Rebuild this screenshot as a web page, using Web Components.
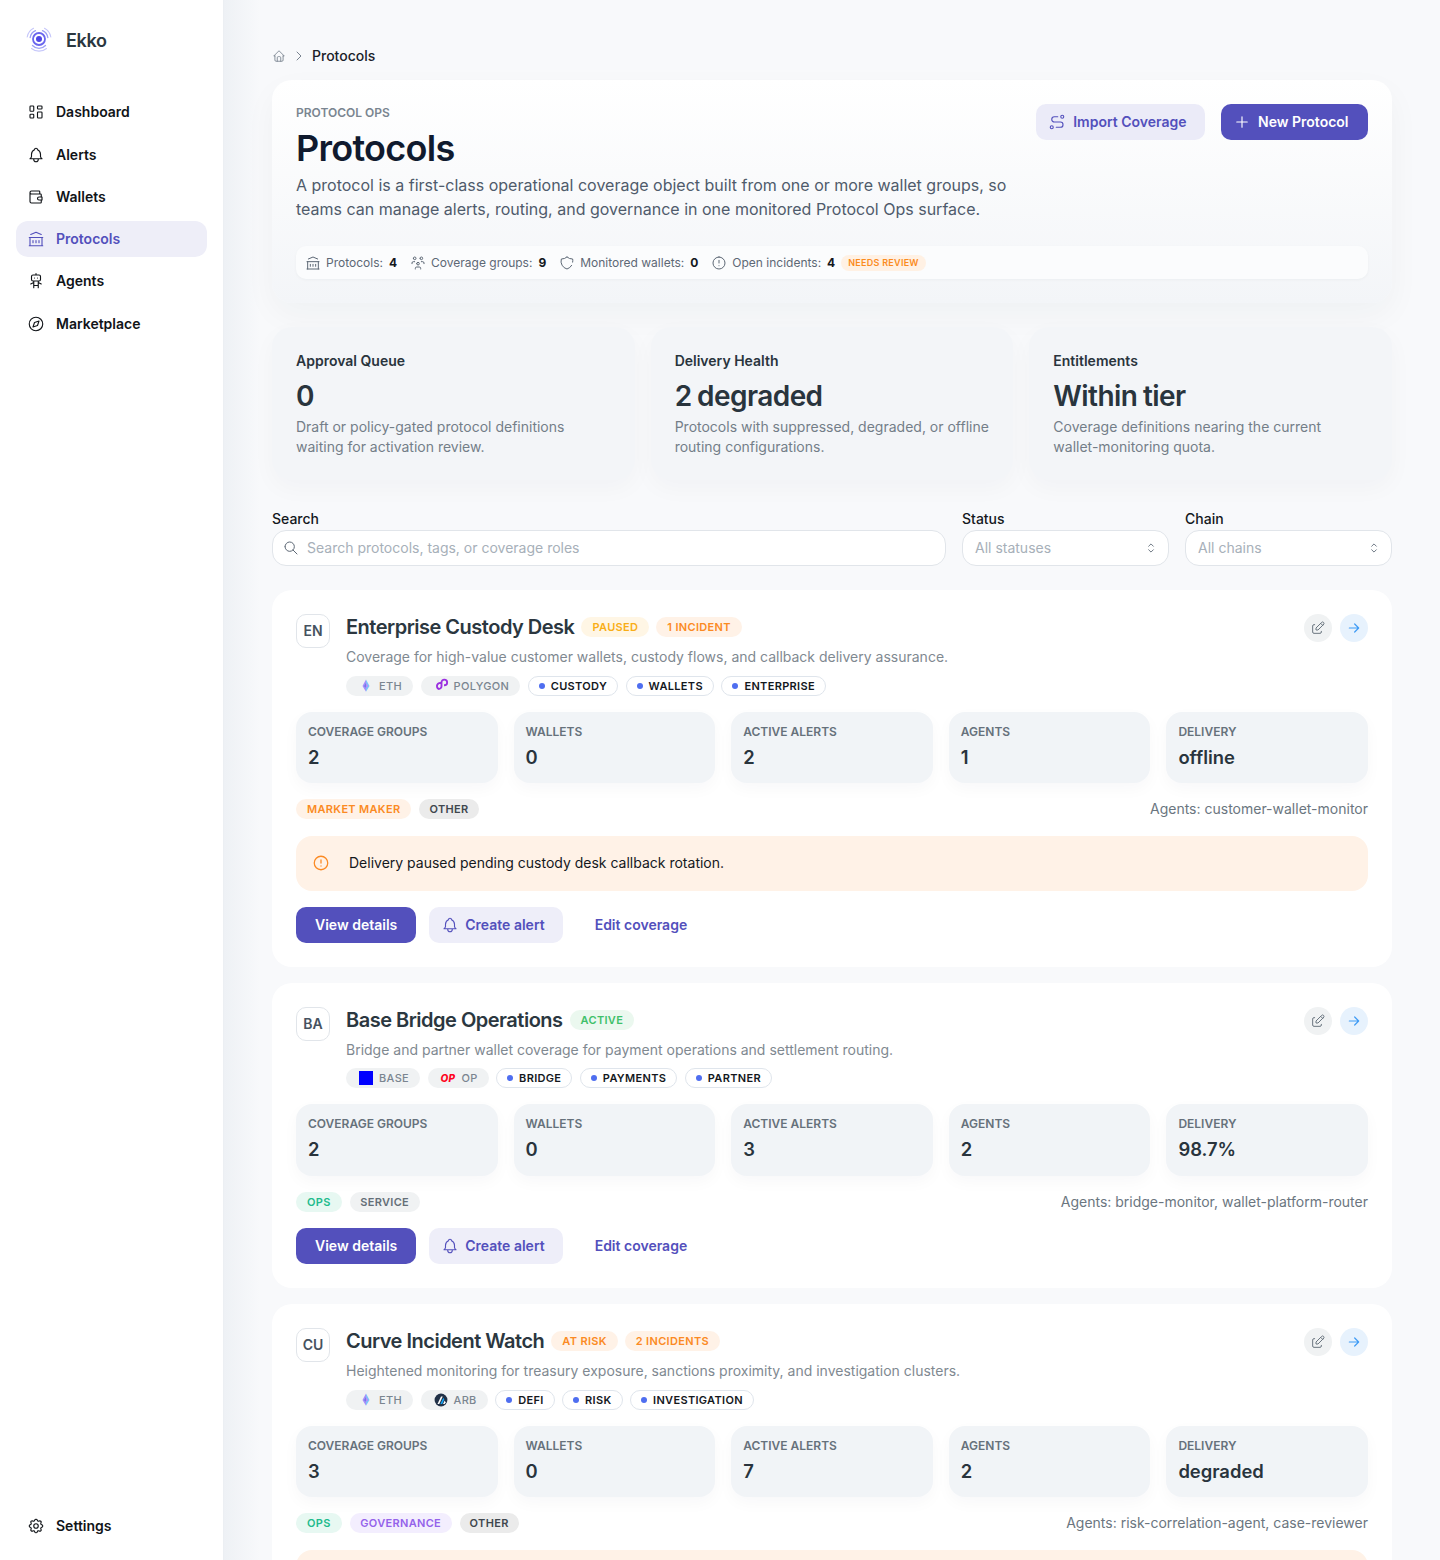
<!DOCTYPE html>
<html lang="en">
<head>
<meta charset="utf-8">
<title>Ekko - Protocols</title>
<style>
  html, body { margin: 0; height: 100%; overflow: hidden; background: #f8f9fb; }
  body { font-family: Inter, "Liberation Sans", sans-serif; color: #0f172a; }
</style>
</head>
<body>
<ekko-shell>
  <ekko-sidebar slot="sidebar"></ekko-sidebar>

  <ekko-breadcrumb>Protocols</ekko-breadcrumb>

  <ekko-hero></ekko-hero>

  <ekko-summary>
    <ekko-summary-card title="Approval Queue" value="0">Draft or policy-gated protocol definitions waiting for activation review.</ekko-summary-card>
    <ekko-summary-card title="Delivery Health" value="2 degraded">Protocols with suppressed, degraded, or offline routing configurations.</ekko-summary-card>
    <ekko-summary-card title="Entitlements" value="Within tier">Coverage definitions nearing the current wallet-monitoring quota.</ekko-summary-card>
  </ekko-summary>

  <ekko-filters></ekko-filters>

  <protocol-card code="EN" name="Enterprise Custody Desk"
    desc="Coverage for high-value customer wallets, custody flows, and callback delivery assurance."
    badges="paused:PAUSED,orange:1 INCIDENT" chains="eth:ETH,polygon:POLYGON" tags="CUSTODY,WALLETS,ENTERPRISE"
    metrics="2,0,2,1,offline" roles="orange:MARKET MAKER,gray:OTHER"
    agents="Agents: customer-wallet-monitor"
    alert="Delivery paused pending custody desk callback rotation."></protocol-card>

  <protocol-card code="BA" name="Base Bridge Operations"
    desc="Bridge and partner wallet coverage for payment operations and settlement routing."
    badges="green:ACTIVE" chains="base:BASE,op:OP" tags="BRIDGE,PAYMENTS,PARTNER"
    metrics="2,0,3,2,98.7%" roles="teal:OPS,slate:SERVICE"
    agents="Agents: bridge-monitor, wallet-platform-router"></protocol-card>

  <!-- the page is cut just under the alert's top edge here, so no alert text and no action row -->
  <protocol-card code="CU" name="Curve Incident Watch" no-actions
    desc="Heightened monitoring for treasury exposure, sanctions proximity, and investigation clusters."
    badges="orange:AT RISK,orange:2 INCIDENTS" chains="eth:ETH,arb:ARB" tags="DEFI,RISK,INVESTIGATION"
    metrics="3,0,7,2,degraded" roles="teal:OPS,violet:GOVERNANCE,gray:OTHER"
    agents="Agents: risk-correlation-agent, case-reviewer"
    alert=" "></protocol-card>
</ekko-shell>

<script>
// tabler style outline icons, all on a 24 box
const ICONS = {
  dashboard: 'M5 4h3a1 1 0 0 1 1 1v5a1 1 0 0 1-1 1H5a1 1 0 0 1-1-1V5a1 1 0 0 1 1-1z M5 15h3a1 1 0 0 1 1 1v3a1 1 0 0 1-1 1H5a1 1 0 0 1-1-1v-3a1 1 0 0 1 1-1z M15 4h4a1 1 0 0 1 1 1v2a1 1 0 0 1-1 1h-4a1 1 0 0 1-1-1V5a1 1 0 0 1 1-1z M15 12h4a1 1 0 0 1 1 1v6a1 1 0 0 1-1 1h-4a1 1 0 0 1-1-1v-6a1 1 0 0 1 1-1z',
  bell: 'M10 5a2 2 0 1 1 4 0a7 7 0 0 1 4 6v3a4 4 0 0 0 2 3H4a4 4 0 0 0 2-3v-3a7 7 0 0 1 4-6 M9 17v1a3 3 0 0 0 6 0v-1',
  wallet: 'M17 8V5a1 1 0 0 0-1-1H6a2 2 0 0 0 0 4h12a1 1 0 0 1 1 1v3 M19 16v3a1 1 0 0 1-1 1H6a2 2 0 0 1-2-2V6 M20 12v4h-4a2 2 0 0 1 0-4h4',
  bank: 'M3 21h18 M3 10h18 M5 6l7-3l7 3 M4 10v11 M20 10v11 M8 14v3 M12 14v3 M16 14v3',
  robot: 'M6 6a2 2 0 0 1 2-2h8a2 2 0 0 1 2 2v4a2 2 0 0 1-2 2H8a2 2 0 0 1-2-2z M12 2v2 M9 12v9 M15 12v9 M5 16l4-2 M15 14l4 2 M9 18h6 M10 8v.01 M14 8v.01',
  compass: 'M12 3a9 9 0 1 0 0 18a9 9 0 0 0 0-18z M8 16l2-6l6-2l-2 6l-6 2',
  settings: 'M10.325 4.317c.426-1.756 2.924-1.756 3.35 0a1.724 1.724 0 0 0 2.573 1.066c1.543-.94 3.31.826 2.37 2.37a1.724 1.724 0 0 0 1.065 2.572c1.756.426 1.756 2.924 0 3.35a1.724 1.724 0 0 0-1.066 2.573c.94 1.543-.826 3.31-2.37 2.37a1.724 1.724 0 0 0-2.572 1.065c-.426 1.756-2.924 1.756-3.35 0a1.724 1.724 0 0 0-2.573-1.066c-1.543.94-3.31-.826-2.37-2.37a1.724 1.724 0 0 0-1.065-2.572c-1.756-.426-1.756-2.924 0-3.35a1.724 1.724 0 0 0 1.066-2.573c-.94-1.543.826-3.31 2.37-2.37c1 .608 2.296.07 2.572-1.065z M9 12a3 3 0 1 0 6 0a3 3 0 0 0-6 0',
  home: 'M5 12H3l9-9l9 9h-2 M5 12v7a2 2 0 0 0 2 2h10a2 2 0 0 0 2-2v-7 M9 21v-6a2 2 0 0 1 2-2h2a2 2 0 0 1 2 2v6',
  chevron: 'M9 6l6 6l-6 6',
  users: 'M10 13a2 2 0 1 0 4 0a2 2 0 0 0-4 0 M8 21v-1a2 2 0 0 1 2-2h4a2 2 0 0 1 2 2v1 M15 5a2 2 0 1 0 4 0a2 2 0 0 0-4 0 M17 10h2a2 2 0 0 1 2 2v1 M5 5a2 2 0 1 0 4 0a2 2 0 0 0-4 0 M3 13v-1a2 2 0 0 1 2-2h2',
  shield: 'M12 3a12 12 0 0 0 8.5 3c.3 1.6.3 3.2 0 4.7 M19 15.5a12 12 0 0 1-7 5.5a12 12 0 0 1-8.5-15a12 12 0 0 0 8.5-3',
  alert: 'M12 3a9 9 0 1 0 0 18a9 9 0 0 0 0-18z M12 8v4 M12 16h.01',
  route: 'M3 19a2 2 0 1 0 4 0a2 2 0 0 0-4 0 M19 7a2 2 0 1 0 0-4a2 2 0 0 0 0 4z M11 19h5.5a3.5 3.5 0 0 0 0-7h-8a3.5 3.5 0 0 1 0-7h4.5',
  plus: 'M12 5v14 M5 12h14',
  search: 'M3 10a7 7 0 1 0 14 0a7 7 0 0 0-14 0 M21 21l-6-6',
  selector: 'M8 9l4-4l4 4 M16 15l-4 4l-4-4',
  edit: 'M7 7H6a2 2 0 0 0-2 2v9a2 2 0 0 0 2 2h9a2 2 0 0 0 2-2v-1 M20.385 6.585a2.1 2.1 0 0 0-2.97-2.97L9 12v3h3l8.385-8.415z M16 5l3 3',
  arrow: 'M5 12h14 M13 18l6-6 M13 6l6 6'
};

const icon = (name, size = 16, width = 1.5) =>
  `<svg width="${size}" height="${size}" viewBox="0 0 24 24" fill="none" stroke="currentColor" stroke-width="${width}" stroke-linecap="round" stroke-linejoin="round" style="display:block;flex:none"><path d="${ICONS[name]}"/></svg>`;

// Logos of the chains
const CHAIN_LOGOS = {
  eth: `<svg width="14" height="14" viewBox="0 0 24 24" style="display:block;flex:none"><path d="M12 1L6 12l6 10z" fill="#a78bfa"/><path d="M12 1l6 11l-6 10z" fill="#7cc4f8"/><path d="M12 7L8.500 12.500L12 15z" fill="#6d7fe8"/><path d="M12 7l3.500 5.500L12 15z" fill="#c084fc"/></svg>`,
  polygon: `<svg width="15" height="15" viewBox="0 0 24 24" fill="none" stroke="#9b30e0" stroke-width="3" stroke-linejoin="round" style="display:block;flex:none;margin-right:-1px"><path d="M10 11v-.5a4.500 4.500 0 1 0-4.500 9a4.500 4.500 0 0 0 4.500-4.500V9a4.500 4.500 0 1 1 4.500 4.500H14" transform="translate(2 -2)"/></svg>`,
  base: `<svg width="14" height="14" viewBox="0 0 14 14" style="display:block;flex:none"><rect width="14" height="14" fill="#0000ff"/></svg>`,
  arb: `<svg width="14" height="14" viewBox="0 0 24 24" style="display:block;flex:none"><circle cx="12" cy="12" r="11" fill="#213147"/><path d="M6 19l6-13h3l-6 13z" fill="#fff"/><path d="M11 19l5-11l1.500 3l-3.500 8z" fill="#12aaff"/><path d="M15.500 19l2.800-6l1.500 3l-1.500 3z" fill="#fff"/></svg>`
};

class EkkoShell extends HTMLElement {
  constructor() {
    super();
    this.attachShadow({ mode: 'open' }).innerHTML = `
      <style>
        :host { display: grid; grid-template-columns: 224px 1fr; height: 100vh; overflow: hidden; }
        main {
          display: flex; flex-direction: column; gap: 16px; min-width: 0; overflow: hidden;
          padding: 46px 48px 0;
          background: linear-gradient(90deg, #eef1f5 0, #f8f9fb 36px);
        }
        ::slotted(*) { flex: none; }
      </style>
      <slot name="sidebar"></slot>
      <main><slot></slot></main>`;
  }
}

class EkkoSidebar extends HTMLElement {
  constructor() {
    super();
    const items = [['dashboard', 'Dashboard'], ['bell', 'Alerts'], ['wallet', 'Wallets'], ['bank', 'Protocols', true], ['robot', 'Agents'], ['compass', 'Marketplace']];
    const row = ([ic, label, active]) => `<a class="${active ? 'active' : ''}">${icon(ic, 18)}<span>${label}</span></a>`;
    this.attachShadow({ mode: 'open' }).innerHTML = `
      <style>
        :host { display: flex; flex-direction: column; height: 100vh; box-sizing: border-box; background: #fff; border-right: 1px solid #eceff3; padding: 0 16px 16px; }
        .brand { display: flex; align-items: center; gap: 13px; height: 80px; padding-left: 9px; margin-bottom: 14.200px; font: 600 18px Inter, sans-serif; letter-spacing: -.02em; color: #2b3740; }
        .brand svg { margin-bottom: 2px; }
        nav { display: flex; flex-direction: column; gap: 6px; }
        a { display: flex; align-items: center; gap: 11px; height: 36.250px; padding: 0 11px; border-radius: 12px; font: 600 14px/20px Inter, sans-serif; color: #111418; }
        a.active { background: #eeeef8; color: #5350bc; }
        .bottom { margin-top: auto; }
      </style>
      <div class="brand">
        <svg width="28" height="28" viewBox="0 0 28 28" fill="none" stroke-linecap="round" style="flex:none">
          <circle cx="14" cy="14" r="3" fill="#4f46e5"/>
          <circle cx="14" cy="14" r="6" stroke="#6a66ee" stroke-width="1.800"/>
          <g stroke="#9d9ff5" stroke-width="1.300">
            <path d="M5.200 12.500A9 9 0 0 1 10.500 5.700"/>
            <path d="M17.500 5.700A9 9 0 0 1 22.800 12.500"/>
            <path d="M7.500 20.500A9 9 0 0 0 20.500 20.500"/>
          </g>
          <g stroke="#c5c6fa" stroke-width="1.100">
            <path d="M2.200 12A12 12 0 0 1 8.500 3.300"/>
            <path d="M19.500 3.300A12 12 0 0 1 25.800 12"/>
            <path d="M6.500 23.500A12 12 0 0 0 21.500 23.500"/>
          </g>
        </svg>
        <span>Ekko</span>
      </div>
      <nav>${items.map(row).join('')}</nav>
      <nav class="bottom">${row(['settings', 'Settings'])}</nav>`;
  }
}

class EkkoBreadcrumb extends HTMLElement {
  constructor() {
    super();
    this.attachShadow({ mode: 'open' }).innerHTML = `
      <style>
        :host { display: flex; align-items: center; gap: 5px; height: 20px; margin-bottom: -2px; font: 500 14px/20px Inter, sans-serif; color: #1b2229; }
        .i { color: #79838f; }
      </style>
      <span class="i">${icon('home', 14)}</span>
      <span class="i">${icon('chevron', 16)}</span>
      <slot></slot>`;
  }
}

class EkkoHero extends HTMLElement {
  constructor() {
    super();
    const stat = (ic, label, value) => `<span class="stat">${icon(ic, 16)}<span>${label}:</span><b>${value}</b></span>`;
    this.attachShadow({ mode: 'open' }).innerHTML = `
      <style>
        :host { display: block; padding: 24px; border-radius: 20px; background: linear-gradient(180deg, #ffffff 0%, #f3f5f8 100%); box-shadow: 0 12px 32px rgba(30, 41, 59, .04); margin-bottom: 8px; }
        .top { display: flex; justify-content: space-between; align-items: flex-start; }
        .eyebrow { font: 600 12px/18px Inter, sans-serif; color: #7a8590; margin-bottom: 4px; }
        h1 { margin: 0; font: 600 36px/44px Inter, sans-serif; letter-spacing: -.02em; color: #101a2e; }
        p { margin: 3px 0 0; max-width: 720px; font: 400 16px/24px Inter, sans-serif; color: #4f5b6b; }
        .actions { display: flex; gap: 16px; }
        button { display: flex; align-items: center; gap: 7px; height: 36px; padding: 0 18.500px 0 12px; border: 0; border-radius: 10px; font: 600 14px/20px Inter, sans-serif; }
        .soft { background: #ebebf8; color: #5350bc; }
        .solid { background: #5350bc; color: #fff; padding-right: 19.500px; }
        .bar { display: flex; align-items: center; gap: 13px; height: 33px; margin-top: 25px; padding: 0 9px; border-radius: 10px; background: #fbfcfd; box-shadow: 0 1px 3px rgba(30, 41, 59, .04); font: 400 12px Inter, sans-serif; color: #5d6875; }
        .stat { display: flex; align-items: center; gap: 5px; }
        b { font-weight: 700; color: #14181d; margin-left: 1px; }
        .flag { margin-left: -7px; padding: 2px 7px; border-radius: 999px; background: #fff1e4; color: #fb8c1e; font: 600 9px/12px Inter, sans-serif; letter-spacing: .03em; }
      </style>
      <div class="top">
        <div>
          <div class="eyebrow">PROTOCOL OPS</div>
          <h1>Protocols</h1>
          <p>A protocol is a first-class operational coverage object built from one or more wallet groups, so teams can manage alerts, routing, and governance in one monitored Protocol Ops surface.</p>
        </div>
        <div class="actions">
          <button class="soft">${icon('route', 18)}Import Coverage</button>
          <button class="solid">${icon('plus', 18)}New Protocol</button>
        </div>
      </div>
      <div class="bar">
        ${stat('bank', 'Protocols', 4)}
        ${stat('users', 'Coverage groups', 9)}
        ${stat('shield', 'Monitored wallets', 0)}
        ${stat('alert', 'Open incidents', 4)}
        <span class="flag">NEEDS REVIEW</span>
      </div>`;
  }
}

class EkkoSummary extends HTMLElement {
  constructor() {
    super();
    this.attachShadow({ mode: 'open' }).innerHTML = `
      <style>:host { display: grid; grid-template-columns: repeat(3, 1fr); gap: 16px; margin-bottom: 13px; }</style>
      <slot></slot>`;
  }
}

class EkkoSummaryCard extends HTMLElement {
  constructor() {
    super();
    this.attachShadow({ mode: 'open' }).innerHTML = `
      <style>
        :host { display: block; height: 153px; box-sizing: border-box; padding: 24px; border-radius: 20px; background: #f3f5f8; box-shadow: 0 8px 24px rgba(30, 41, 59, .03); }
        .t { font: 600 14px/20px Inter, sans-serif; color: #29343d; }
        .v { margin-top: 5px; font: 600 28px/40px Inter, sans-serif; letter-spacing: -.02em; word-spacing: -1px; color: #29343d; }
        .d { margin-top: 1px; font: 400 14px/20px Inter, sans-serif; color: #737e88; }
      </style>
      <div class="t">${this.getAttribute('title')}</div>
      <div class="v">${this.getAttribute('value')}</div>
      <div class="d"><slot></slot></div>`;
  }
}

class EkkoFilters extends HTMLElement {
  constructor() {
    super();
    const select = (label, text) => `
      <label>${label}<div class="field">${text}<span class="sel">${icon('selector', 14)}</span></div></label>`;
    this.attachShadow({ mode: 'open' }).innerHTML = `
      <style>
        :host { display: grid; grid-template-columns: 1fr 207px 207px; gap: 16px; margin-bottom: 7.750px; font: 500 14px/20px Inter, sans-serif; color: #14181d; }
        label { display: block; }
        .field { display: flex; align-items: center; height: 36px; margin-top: 1px; box-sizing: border-box; padding: 0 10px 0 12px; background: #fff; border: 1px solid #e1e5ea; border-radius: 14px; font: 400 14px/20px Inter, sans-serif; color: #a7b0b9; }
        .search { gap: 8px; padding-left: 10px; }
        .search svg { color: #5d6875; }
        .sel { margin-left: auto; color: #5d6875; }
      </style>
      <label>Search<div class="field search">${icon('search', 16)}Search protocols, tags, or coverage roles</div></label>
      ${select('Status', 'All statuses')}
      ${select('Chain', 'All chains')}`;
  }
}

// small pill used everywhere on a protocol card
class EkkoPill extends HTMLElement {
  constructor() {
    super();
    this.attachShadow({ mode: 'open' }).innerHTML = `
      <style>
        :host { display: inline-flex; align-items: center; gap: 8px; height: 20px; box-sizing: border-box; padding: 0 11px; border-radius: 999px; font: 600 11px Inter, sans-serif; letter-spacing: .03em; white-space: nowrap; }
        :host([tone=paused]) { background: #fff6e5; color: #f9ae17; }
        :host([tone=orange]) { background: #fff2e7; color: #fb8a23; }
        :host([tone=green]) { background: #ebf8ef; color: #3fc06a; }
        :host([tone=teal]) { background: #e7f8f2; color: #22bb8c; }
        :host([tone=violet]) { background: #f3eefe; color: #9462ea; padding: 0 10.500px; }
        :host([tone=gray]) { background: #ebebeb; color: #40474e; padding: 0 10px; }
        :host([tone=slate]) { background: #f0f2f3; color: #656f78; padding: 0 10.500px; }
        :host([tone=chain]) { background: #f0f2f3; color: #7a8590; font-weight: 500; padding: 0 11px 0 13px; gap: 6px; }
        :host([tone=tag]) { background: #fff; border: 1px solid #dfe5ec; color: #14181d; padding: 0 10px; gap: 6px; }
        i { width: 6px; height: 6px; border-radius: 50%; background: #4f6ef0; }
        .op { font: italic 800 10px Inter, sans-serif; color: #ff0420; letter-spacing: .03em; }
      </style>
      ${this.getAttribute('tone') === 'tag' ? '<i></i>' : ''}
      ${this.getAttribute('logo') === 'op' ? '<span class="op">OP</span>' : (CHAIN_LOGOS[this.getAttribute('logo')] || '')}
      <slot></slot>`;
  }
}

class MetricTile extends HTMLElement {
  constructor() {
    super();
    this.attachShadow({ mode: 'open' }).innerHTML = `
      <style>
        :host { display: block; height: 71.500px; box-sizing: border-box; padding: 12px; border-radius: 16px; background: #f1f4f7; box-shadow: 0 6px 16px rgba(30, 41, 59, .03); }
        .l { font: 600 12px/16px Inter, sans-serif; color: #66717b; }
        .v { margin-top: 4px; font: 600 18.400px/26px Inter, sans-serif; color: #29343d; }
      </style>
      <div class="l">${this.getAttribute('label')}</div>
      <div class="v"><slot></slot></div>`;
  }
}

class ProtocolCard extends HTMLElement {
  constructor() {
    super();
    const attr = n => this.getAttribute(n) || '';
    const pairs = n => attr(n).split(',').map(s => s.split(':'));
    const labels = ['COVERAGE GROUPS', 'WALLETS', 'ACTIVE ALERTS', 'AGENTS', 'DELIVERY'];
    this.attachShadow({ mode: 'open' }).innerHTML = `
      <style>
        :host { display: block; padding: 24px; border-radius: 20px; background: #fff; }
        .head { display: flex; gap: 16px; }
        .avatar { flex: none; display: flex; align-items: center; justify-content: center; width: 34px; height: 34px; box-sizing: border-box; border: 1px solid #e1e5ea; border-radius: 10px; font: 600 14px/20px Inter, sans-serif; color: #46525f; }
        .info { flex: 1; min-width: 0; }
        .title { display: flex; align-items: center; gap: 7px; height: 26px; }
        h3 { margin: 0; font: 600 20px/26px Inter, sans-serif; letter-spacing: -.025em; color: #2b3740; }
        .desc { margin-top: 7px; font: 400 14px/20px Inter, sans-serif; color: #7f8991; }
        .pills { display: flex; gap: 7.500px; margin-top: 8.800px; }
        .tools { display: flex; gap: 8px; flex: none; }
        .tools span { display: flex; align-items: center; justify-content: center; width: 28px; height: 28px; border-radius: 50%; }
        .edit { background: #f0f2f3; color: #6b7680; }
        .go { background: #e7f2fd; color: #3f9bf5; }
        .metrics { display: grid; grid-template-columns: repeat(5, 1fr); gap: 16px; margin-top: 16px; }
        .meta { display: flex; align-items: center; justify-content: space-between; margin-top: 16px; font: 400 14px/20px Inter, sans-serif; color: #6b7680; }
        .meta div { display: flex; gap: 8px; }
        .alert { display: flex; align-items: center; gap: 19px; height: 54.600px; box-sizing: border-box; margin-top: 17px; padding: 0 16px 1px; border-radius: 16px; background: #fff2e7; font: 400 14px/20px Inter, sans-serif; color: #14181d; }
        .alert svg { color: #fb8a23; }
        .actions { display: flex; align-items: center; gap: 13px; margin-top: 16px; }
        .btn { display: flex; align-items: center; gap: 6px; height: 36px; padding: 0 19px; border-radius: 10px; font: 600 14px/20px Inter, sans-serif; white-space: nowrap; }
        .primary { background: #5350bc; color: #fff; }
        .soft { background: #eeeef9; color: #5350bc; padding: 0 18px 0 12px; }
        .plain { color: #5350bc; }
      </style>
      <div class="head">
        <div class="avatar">${attr('code')}</div>
        <div class="info">
          <div class="title">
            <h3>${attr('name')}</h3>
            ${pairs('badges').map(([tone, text]) => `<ekko-pill tone="${tone}">${text}</ekko-pill>`).join('')}
          </div>
          <div class="desc">${attr('desc')}</div>
          <div class="pills">
            ${pairs('chains').map(([logo, text]) => `<ekko-pill tone="chain" logo="${logo}">${text}</ekko-pill>`).join('')}
            ${attr('tags').split(',').map(t => `<ekko-pill tone="tag">${t}</ekko-pill>`).join('')}
          </div>
        </div>
        <div class="tools"><span class="edit">${icon('edit', 16)}</span><span class="go">${icon('arrow', 16, 1.8)}</span></div>
      </div>
      <div class="metrics">
        ${attr('metrics').split(',').map((v, i) => `<metric-tile label="${labels[i]}">${v}</metric-tile>`).join('')}
      </div>
      <div class="meta">
        <div>${pairs('roles').map(([tone, text]) => `<ekko-pill tone="${tone}">${text}</ekko-pill>`).join('')}</div>
        <span>${attr('agents')}</span>
      </div>
      ${attr('alert') ? `<div class="alert">${attr('alert').trim() ? icon('alert', 18, 1.7) + `<span>${attr('alert')}</span>` : ''}</div>` : ''}
      ${this.hasAttribute('no-actions') ? '' : `<div class="actions">
        <a class="btn primary">View details</a>
        <a class="btn soft">${icon('bell', 18)}Create alert</a>
        <a class="btn plain">Edit coverage</a>
      </div>`}`;
  }
}

customElements.define('ekko-shell', EkkoShell);
customElements.define('ekko-sidebar', EkkoSidebar);
customElements.define('ekko-breadcrumb', EkkoBreadcrumb);
customElements.define('ekko-hero', EkkoHero);
customElements.define('ekko-summary', EkkoSummary);
customElements.define('ekko-summary-card', EkkoSummaryCard);
customElements.define('ekko-filters', EkkoFilters);
customElements.define('ekko-pill', EkkoPill);
customElements.define('metric-tile', MetricTile);
customElements.define('protocol-card', ProtocolCard);
</script>
</body>
</html>
